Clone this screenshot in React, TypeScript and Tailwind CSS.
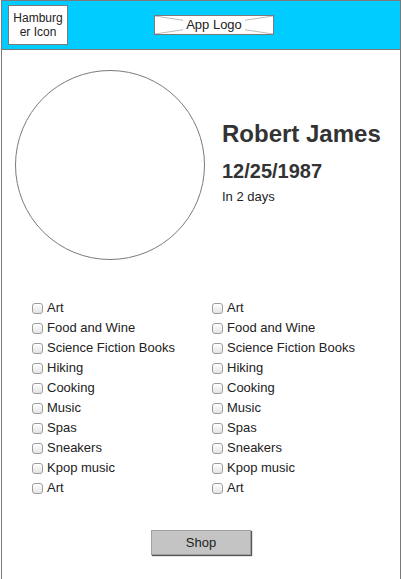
const INTERESTS = [
  "Art",
  "Food and Wine",
  "Science Fiction Books",
  "Hiking",
  "Cooking",
  "Music",
  "Spas",
  "Sneakers",
  "Kpop music",
  "Art",
];

function Checkbox({ label }: { label: string }) {
  return (
    <label className="flex items-center h-[20px] text-[13px] leading-[20px] text-[#222]">
      <span className="w-[11px] h-[11px] rounded-[3px] border border-[#9c9c9c] bg-gradient-to-b from-white to-[#e4e4e4] shadow-[inset_0_1px_0_#fff] mr-[4px] shrink-0" />
      {label}
    </label>
  );
}

function InterestColumn() {
  return (
    <div className="w-[180px] flex flex-col">
      {INTERESTS.map((item, i) => (
        <Checkbox key={i} label={item} />
      ))}
    </div>
  );
}

export default function App() {
  return (
    <div
      className="w-[400px] ml-px h-[579px] border-x border-t border-[#7a7a7a] bg-white overflow-hidden"
      style={{ fontFamily: '"Liberation Sans", Arial, sans-serif' }}
    >
      {/* header */}
      <div className="h-[49px] bg-[#00ccff] border-b border-[#7a7a7a] flex items-start pl-[6px] pt-[4px]">
        <div className="w-[60px] h-[40px] border border-[#7a7a7a] bg-white flex items-center justify-center text-center text-[12px] leading-[14px] text-[#222]">
          Hamburg
          <br />
          er Icon
        </div>
        <div className="relative ml-[86px] mt-[10px] w-[120px] h-[20px] border border-[#7a7a7a] bg-white flex items-center justify-center">
          <svg
            className="absolute inset-0 w-full h-full"
            viewBox="0 0 118 18"
            preserveAspectRatio="none"
          >
            <line x1="0" y1="0" x2="118" y2="18" stroke="#bbb" strokeWidth="1" />
            <line x1="0" y1="18" x2="118" y2="0" stroke="#bbb" strokeWidth="1" />
          </svg>
          <span className="relative bg-white px-[3px] text-[13px] leading-[16px] text-[#222]">
            App Logo
          </span>
        </div>
      </div>

      {/* profile */}
      <div className="flex items-start pl-[13px] pt-[20px]">
        <div className="w-[190px] h-[190px] rounded-full border border-[#7a7a7a] shrink-0" />
        <div className="ml-[17px] mt-[50px] flex flex-col text-[#333]">
          <div className="text-[24px] leading-[28px] font-bold">Robert James</div>
          <div className="mt-[11px] text-[20px] leading-[24px] font-bold">12/25/1987</div>
          <div className="mt-[6px] text-[13px] leading-[16px] text-[#222]">In 2 days</div>
        </div>
      </div>

      {/* interests */}
      <div className="flex pl-[30px] mt-[38px]">
        <InterestColumn />
        <InterestColumn />
      </div>

      <div className="flex justify-center mt-[32px]">
        <button className="w-[100px] h-[25px] bg-[#c4c4c4] border border-[#a0a0a0] shadow-[1px_1px_1px_#555] text-[13px] text-[#222]">
          Shop
        </button>
      </div>
    </div>
  );
}
